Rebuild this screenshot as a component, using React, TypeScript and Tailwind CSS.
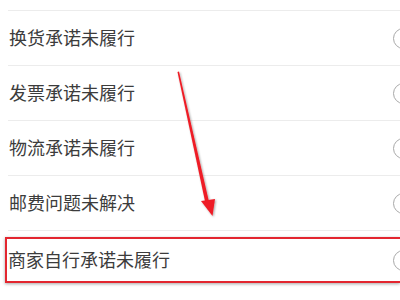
import React from 'react';

const items = [
  '换货承诺未履行',
  '发票承诺未履行',
  '物流承诺未履行',
  '邮费问题未解决',
  '商家自行承诺未履行',
];

const Radio = () => (
  <span className="ml-auto -mr-[14px] h-[21px] w-[21px] shrink-0 rounded-full border-[1.5px] border-[#a8a8a8]" />
);

const App = () => {
  return (
    <div
      className="relative h-[300px] w-[400px] overflow-hidden bg-white text-[#3c3c3c]"
      style={{ fontFamily: '"Noto Sans CJK SC", "Noto Sans", sans-serif' }}
    >
      <div className="h-[10px]" />
      {items.map((label, i) => {
        const picked = i === items.length - 1;
        return (
          <div key={label} className="ml-[8px] h-[55px] border-t border-[#ececec]">
            {picked ? (
              <div className="-ml-[3px] mt-[6px] flex h-[46px] items-center border-[2.5px] border-r-0 border-[#e3262f] pl-[1px] shadow-[0_1px_3px_rgba(0,0,0,0.35)]">
                <span className="-mt-[2px] text-[18px] leading-none">{label}</span>
                <Radio />
              </div>
            ) : (
              <div className="flex h-full items-center pl-[1px]">
                <span className="-mt-[2px] text-[18px] leading-none">{label}</span>
                <Radio />
              </div>
            )}
          </div>
        );
      })}

      <svg className="pointer-events-none absolute left-0 top-0" width="400" height="300" viewBox="0 0 400 300">
        <defs>
          <filter id="sh" x="-50%" y="-50%" width="200%" height="200%">
            <feDropShadow dx="1" dy="1" stdDeviation="1.2" floodColor="#000" floodOpacity="0.35" />
          </filter>
        </defs>
        <g filter="url(#sh)" fill="#ee1c25">
          <polygon points="177.5,72 179,71.6 209.5,204 205.8,205" />
          <polygon points="201,201 215,199 212.5,216" />
        </g>
      </svg>
    </div>
  );
};

export default App;
